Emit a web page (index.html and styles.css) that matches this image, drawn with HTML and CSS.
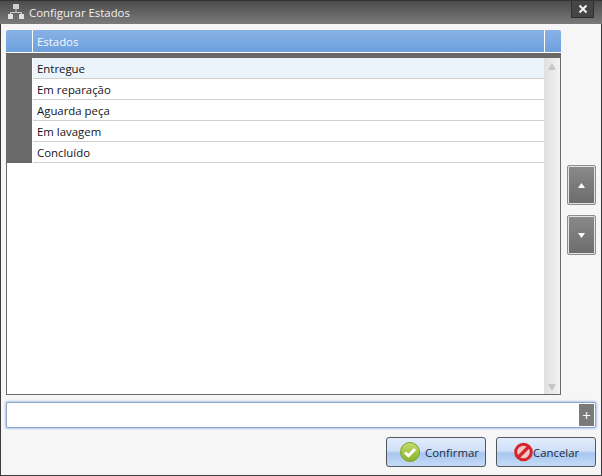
FILE: index.html
```html
<!DOCTYPE html>
<html lang="pt">
<head>
<meta charset="utf-8">
<title>Configurar Estados</title>
<link rel="stylesheet" href="styles.css">
</head>
<body>
<div class="window">
  <header class="titlebar">
    <svg class="app-icon" width="16" height="16" viewBox="0 0 16 16">
      <rect x="5" y="0" width="6" height="5" fill="#cfcfcf"/>
      <rect x="0" y="10" width="5" height="5" fill="#e0e0e0"/>
      <rect x="11" y="10" width="5" height="5" fill="#e0e0e0"/>
      <path d="M8 5v3M2.500 10V8.500h11V10" stroke="#cfcfcf" fill="none"/>
    </svg>
    <span class="title">Configurar Estados</span>
    <button class="close">
      <svg width="10" height="10" viewBox="0 0 10 10"><path d="M1.500 1.500l7 7M8.500 1.500l-7 7" stroke="#f2f2f2" stroke-width="2"/></svg>
    </button>
  </header>
  <main class="content">
    <div class="top">
      <section class="grid">
        <div class="grid-head">
          <div class="head-gutter"></div>
          <div class="head-col">Estados</div>
          <div class="head-end"></div>
        </div>
        <div class="grid-sep"></div>
        <div class="grid-body">
          <div class="rows-wrap">
            <div class="gutter"></div>
            <ul class="rows">
              <li class="row selected">Entregue</li>
              <li class="row">Em reparação</li>
              <li class="row">Aguarda peça</li>
              <li class="row">Em lavagem</li>
              <li class="row">Concluído</li>
            </ul>
          </div>
          <div class="scrollbar">
            <svg width="8" height="7" viewBox="0 0 8 7"><path d="M4 0l4 7H0z" fill="#c6c6c6"/></svg>
            <svg width="8" height="7" viewBox="0 0 8 7"><path d="M0 0h8L4 7z" fill="#c6c6c6"/></svg>
          </div>
        </div>
      </section>
      <div class="movers">
        <button class="move"><svg width="7" height="5" viewBox="0 0 7 5"><path d="M3.500 0L7 5H0z" fill="#fff"/></svg></button>
        <button class="move"><svg width="7" height="5" viewBox="0 0 7 5"><path d="M0 0h7L3.500 5z" fill="#fff"/></svg></button>
      </div>
    </div>
    <div class="add-bar">
      <input class="add-input" type="text">
      <button class="add-btn">+</button>
    </div>
    <footer class="actions">
      <button class="action">
        <svg width="20" height="20" viewBox="0 0 20 20">
          <defs>
            <linearGradient id="ok" x1="0" y1="0" x2="0" y2="1"><stop offset="0" stop-color="#c6dc70"/><stop offset="1" stop-color="#86b32a"/></linearGradient>
          </defs>
          <circle cx="10" cy="10" r="9.500" fill="url(#ok)" stroke="#7f9f2a"/>
          <path d="M5 10.500l3.500 3.200L15 7" fill="none" stroke="#fff" stroke-width="3"/>
        </svg>
        <span>Confirmar</span>
      </button>
      <button class="action cancel">
        <svg width="19" height="20" viewBox="0 0 19 20">
          <circle cx="9.500" cy="10" r="7.800" fill="#eec9c9" stroke="#d8232a" stroke-width="3"/>
          <path d="M4 15.500l11-11" stroke="#d8232a" stroke-width="3.200"/>
        </svg>
        <span>Cancelar</span>
      </button>
    </footer>
  </main>
</div>
</body>
</html>
```
FILE: styles.css
```css
* { box-sizing: border-box; }
html, body { margin: 0; padding: 0; }
body { width: 602px; height: 476px; overflow: hidden; font-family: "Open Sans", "Noto Sans", sans-serif; }
.window {
  width: 602px; height: 476px; display: flex; flex-direction: column;
  background: #f6f6f6; border: 1px solid #3c3c3c; border-top: 0;
}
.titlebar {
  height: 24px; flex: none; display: flex; align-items: center; padding-left: 8px;
  background: linear-gradient(#4c4c4c, #7a7a7a);
  border-top: 1px solid #333;
  margin: 0 -1px; position: relative;
}
.app-icon { flex: none; margin-bottom: 2px; }
.title { margin-left: 5px; font-size: 11.4px; color: #f0f0f0; }
.close {
  position: absolute; right: 8px; top: 0; width: 23px; height: 17px; padding: 0;
  display: flex; align-items: center; justify-content: center;
  background: #454545; border: 1px solid #2f2f2f; border-top: 0;
}
.content { flex: 1; display: flex; flex-direction: column; padding: 6px 5px 8px 5px; }
.top { flex: 1; display: flex; min-height: 0; }
.grid { width: 555px; flex: none; display: flex; flex-direction: column; }
.grid-head { height: 22px; flex: none; display: flex; background: linear-gradient(#88b2e6, #6da0de); border-radius: 2px 2px 0 0; }
.head-gutter { width: 27px; flex: none; border-right: 1px solid #fff; }
.head-col { flex: 1; border-right: 1px solid #fff; color: #f4f8ff; font-size: 11.4px; line-height: 24px; padding-left: 4px; }
.head-end { width: 16px; flex: none; }
.grid-sep { height: 6px; flex: none; border-top: 1px solid #fff; background: #696969; }
.grid-body { flex: 1; display: flex; background: #fff; border: 1px solid #696969; border-top: 0; min-height: 0; }
.rows-wrap { flex: 1; display: flex; align-items: flex-start; }
.gutter { width: 25px; height: 105px; background: #696969; flex: none; }
.rows { flex: 1; list-style: none; margin: 0 0 0 1px; padding: 0; }
.row {
  height: 21px; line-height: 22px; padding-left: 4px; font-size: 11.4px; color: #141420;
  border-bottom: 1px solid #cfcfcf; background: #fff;
}
.row.selected { background: #ebf3fb; }
.scrollbar {
  width: 16px; flex: none; display: flex; flex-direction: column; justify-content: space-between;
  align-items: center; padding: 5px 0 3px;
  background: linear-gradient(90deg, #e0e0e0, #f2f2f2);
}
.movers { flex: 1; display: flex; flex-direction: column; gap: 10px; align-items: flex-start; padding: 135px 0 0 6px; }
.move {
  width: 29px; height: 40px; padding: 0; display: flex; align-items: center; justify-content: center;
  background: linear-gradient(#8a8a8a, #6c6c6c);
  border: 1px solid #8c8c8c; box-shadow: inset 0 0 0 1px #e4e4e4; border-radius: 2px;
}
.add-bar {
  height: 26px; flex: none; margin-top: 7px; display: flex; justify-content: flex-end; align-items: center;
  background: #fff; border: 1px solid #8ea6c8; border-radius: 2px; padding-right: 1px;
  box-shadow: 0 0 2px 1px #b0c9ef;
}
.add-input { flex: 1; min-width: 0; height: 100%; border: 0; background: transparent; outline: none; padding: 0 4px; }
.add-btn {
  width: 15px; height: 22px; flex: none; padding: 0; border: 0; background: #7a7a7a; color: #fff;
  font-size: 15px; line-height: 20px; font-family: "Open Sans", sans-serif;
}
.actions { flex: none; display: flex; justify-content: flex-end; gap: 10px; margin-top: 9px; }
.action {
  width: 100px; height: 30px; padding: 0 0 0 13px; display: flex; align-items: center; gap: 5px;
  font-size: 11.4px; color: #1c2a44; font-family: "Open Sans", sans-serif;
  border: 1px solid #53585f; border-radius: 3px;
  background: linear-gradient(#e2edfb 0%, #cfe0f7 45%, #a8c6ef 55%, #c6dbf7 100%);
}
.cancel { padding-left: 17px; gap: 0; }
```
